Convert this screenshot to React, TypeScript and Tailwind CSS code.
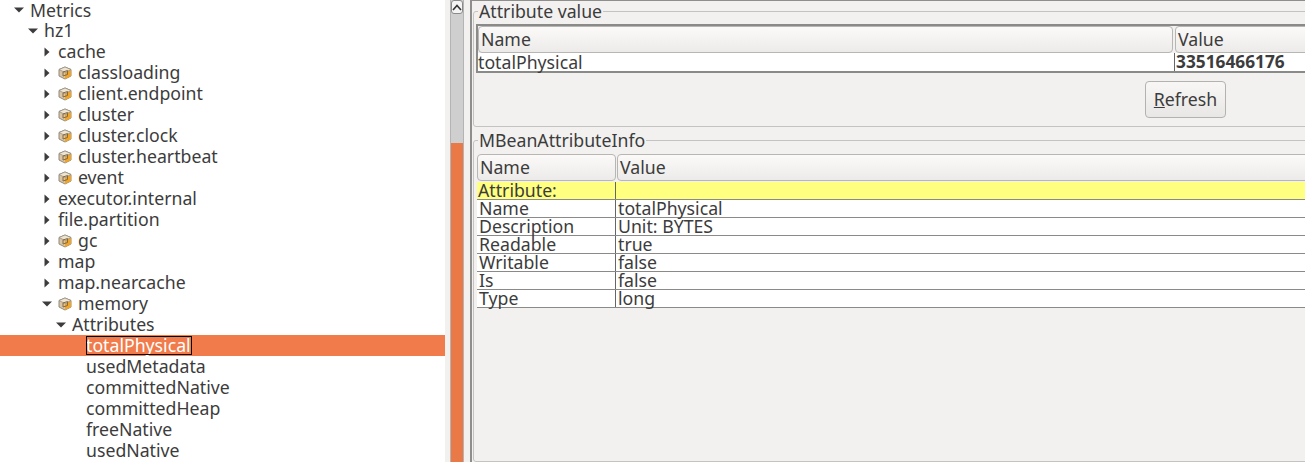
const FONT = "font-['Noto_Sans','Open_Sans',sans-serif]";

type Node = { label: string; indent: number; arrow?: "right" | "down"; bean?: boolean; selected?: boolean };

const TREE: Node[] = [
  { label: "Metrics", indent: 14, arrow: "down" },
  { label: "hz1", indent: 28, arrow: "down" },
  { label: "cache", indent: 42, arrow: "right" },
  { label: "classloading", indent: 42, arrow: "right", bean: true },
  { label: "client.endpoint", indent: 42, arrow: "right", bean: true },
  { label: "cluster", indent: 42, arrow: "right", bean: true },
  { label: "cluster.clock", indent: 42, arrow: "right", bean: true },
  { label: "cluster.heartbeat", indent: 42, arrow: "right", bean: true },
  { label: "event", indent: 42, arrow: "right", bean: true },
  { label: "executor.internal", indent: 42, arrow: "right" },
  { label: "file.partition", indent: 42, arrow: "right" },
  { label: "gc", indent: 42, arrow: "right", bean: true },
  { label: "map", indent: 42, arrow: "right" },
  { label: "map.nearcache", indent: 42, arrow: "right" },
  { label: "memory", indent: 42, arrow: "down", bean: true },
  { label: "Attributes", indent: 56, arrow: "down" },
  { label: "totalPhysical", indent: 86, selected: true },
  { label: "usedMetadata", indent: 86 },
  { label: "committedNative", indent: 86 },
  { label: "committedHeap", indent: 86 },
  { label: "freeNative", indent: 86 },
  { label: "usedNative", indent: 86 },
];

const INFO = [
  ["Name", "totalPhysical"],
  ["Description", "Unit: BYTES"],
  ["Readable", "true"],
  ["Writable", "false"],
  ["Is", "false"],
  ["Type", "long"],
];

function Arrow({ dir }: { dir: "right" | "down" }) {
  return (
    <svg width="10" height="10" viewBox="0 0 10 10" className="shrink-0">
      {dir === "right" ? <path d="M2.5 0.5 L7.5 5 L2.5 9.5 Z" fill="#3c3c3c" /> : <path d="M0 2.5 H10 L5 7.5 Z" fill="#3c3c3c" />}
    </svg>
  );
}

function Bean() {
  return (
    <svg width="14" height="14" viewBox="0 0 14 14" className="shrink-0">
      <path d="M7 1 L13 3.5 V10 L7 13 L1 10 V3.5 Z" fill="#dcc4a0" stroke="#8f8a80" strokeWidth="1" />
      <path d="M7 6.5 L13 3.8 V10 L7 13 Z" fill="#f0a428" />
      <path d="M1 3.5 L7 6.5 L13 3.5 L7 1 Z" fill="#efe4d0" stroke="#8f8a80" strokeWidth="0.7" />
      <path d="M5 6 L9.5 4.5 V8.5 L5 10 Z" fill="none" stroke="#7d6a4c" strokeWidth="1" />
    </svg>
  );
}

function TreeRow({ node, first }: { node: Node; first: boolean }) {
  return (
    <div
      className={`flex items-center ${first ? "h-[20px]" : "h-[21px]"} ${node.selected ? "bg-[#f17b4a] text-white" : "text-[#3c3c3c]"}`}
      style={{ paddingLeft: node.indent }}
    >
      {node.arrow && (
        <span className="mr-[6px] flex w-[10px] shrink-0 justify-center">
          <Arrow dir={node.arrow} />
        </span>
      )}
      {node.bean && (
        <span className="mr-[6px] flex shrink-0">
          <Bean />
        </span>
      )}
      <span className={`leading-[19px] ${node.selected ? "outline outline-1 -outline-offset-1 outline-black" : ""} pr-px`}>{node.label}</span>
    </div>
  );
}

function HeaderCell({ label, className }: { label: string; className: string }) {
  return (
    <div className={`flex items-center rounded-[4px] border border-[#b8b6b2] bg-gradient-to-b from-[#fbfaf9] to-[#ecebe9] pl-[2px] text-[#3c3c3c] ${className}`}>
      {label}
    </div>
  );
}

export default function App() {
  return (
    <div className={`flex h-[462px] w-[1305px] overflow-hidden bg-[#f2f1f0] text-[17.7px] ${FONT}`}>
      <div className="h-full w-[445px] shrink-0 overflow-hidden bg-white">
        {TREE.map((n, i) => (
          <TreeRow key={n.label} node={n} first={i === 0} />
        ))}
      </div>

      <div className="flex w-[25px] shrink-0 pl-[5px]">
        <div className="flex h-full w-[14px] flex-col border-x border-[#b4b4b4] bg-[#cfcfcf]">
          <div className="flex h-[14px] items-center justify-center rounded-[3px] border border-[#8a8a8a] bg-[#f4f4f4]">
            <svg width="10" height="7" viewBox="0 0 10 7">
              <path d="M1 6 L5 1.5 L9 6" fill="none" stroke="#333" strokeWidth="1.6" />
            </svg>
          </div>
          <div className="mt-[129px] flex-1 bg-[#e97a48]" />
        </div>
      </div>

      <div className="flex min-w-0 flex-1 flex-col border-l-2 border-t border-[#8e8e8c] pl-[1px] text-[#3c3c3c]">
        <fieldset className="h-[126px] w-[900px] rounded-[3px] border border-[#c4c3c1] pl-[2px]">
          <legend className="ml-[2px] px-[1px] leading-[20px]">Attribute value</legend>
          <div className="mt-[3px] w-[900px] border-y-2 border-l-2 border-[#8a8a88]">
            <div className="flex h-[27px]">
              <HeaderCell label="Name" className="w-[695px]" />
              <HeaderCell label="Value" className="ml-[2px] flex-1" />
            </div>
            <div className="flex h-[18px] bg-white leading-[18px]">
              <div className="w-[696px]">totalPhysical</div>
              <div className="border-l border-[#666] pl-px text-[17.3px] font-bold">33516466176</div>
            </div>
          </div>
          <div className="mt-[8px] flex w-[750px] justify-end">
            <button className="h-[37px] w-[81px] rounded-[4px] border border-[#b4b2ae] bg-gradient-to-b from-[#f8f7f6] to-[#e8e7e5] text-[#3c3c3c]">
              <span className="underline">R</span>efresh
            </button>
          </div>
        </fieldset>

        <fieldset className="mt-[3px] min-h-0 flex-1 rounded-[3px] border border-[#c4c3c1] pl-[3px]">
          <legend className="ml-[1px] px-[1px] leading-[20px]">MBeanAttributeInfo</legend>
          <div className="mt-[4px] flex h-[27px] w-[900px]">
            <HeaderCell label="Name" className="w-[139px]" />
            <HeaderCell label="Value" className="ml-[1px] flex-1" />
          </div>
          <div className="mt-[1px] w-[900px] leading-[17px]">
            <div className="flex h-[18px] border-b border-[#8a8a88] bg-[#ffff80]">
              <div className="w-[139px] border-r border-[#666] pl-px">Attribute:</div>
            </div>
            {INFO.map(([name, value]) => (
              <div key={name} className="flex h-[18px] border-b border-[#8a8a88] bg-white">
                <div className="w-[139px] border-r border-[#666] pl-[2px]">{name}</div>
                <div className="pl-[2px]">{value}</div>
              </div>
            ))}
          </div>
        </fieldset>
      </div>
    </div>
  );
}
